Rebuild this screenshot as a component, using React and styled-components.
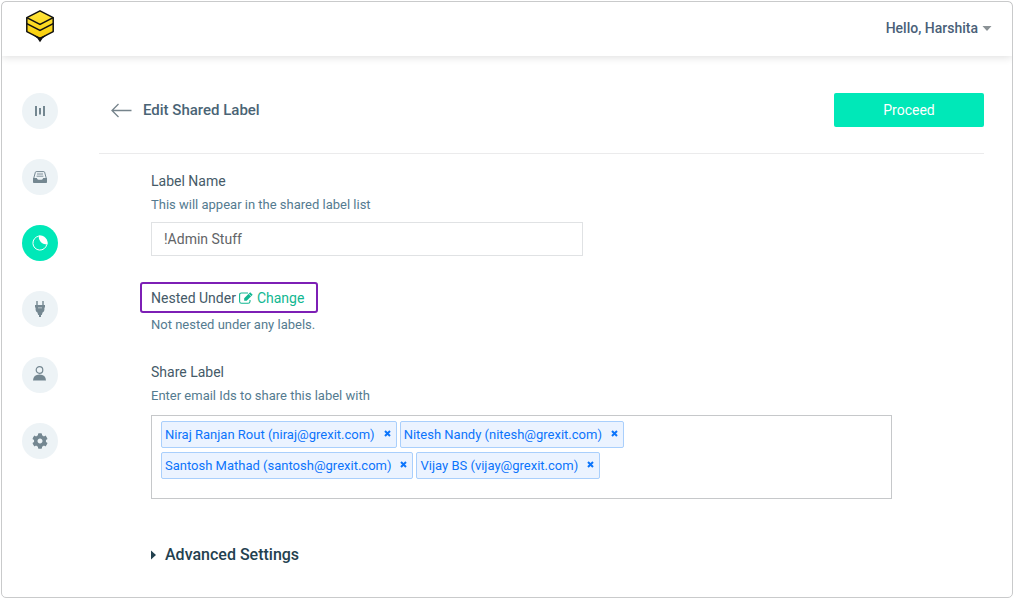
import React, { useState } from 'react'
import styled, { createGlobalStyle } from 'styled-components'
import { FaCog } from 'react-icons/fa'

const GlobalStyle = createGlobalStyle`
  *, *::before, *::after {
    box-sizing: border-box;
  }
  body {
    margin: 0;
    background: #ffffff;
    color: #455a68;
    font-family: Roboto, 'Liberation Sans', sans-serif;
    font-size: 14px;
    line-height: 20px;
  }
  button, input {
    font: inherit;
    color: inherit;
  }
  button {
    border: 0;
    padding: 0;
    background: none;
    cursor: pointer;
  }
`

const Frame = styled.div`
  display: flex;
  flex-direction: column;
  min-height: calc(100vh - 3px);
  margin: 1px 1px 2px;
  border: 1px solid #c9cacb;
  border-radius: 5px;
`

const Header = styled.header`
  display: flex;
  align-items: center;
  justify-content: space-between;
  height: 54px;
  padding: 0 20px 2px 23px;
  border-radius: 5px 5px 0 0;
  box-shadow: 0 1px 8px rgba(0, 0, 0, 0.14);
  clip-path: inset(0 0 -12px 0);
`

const LogoLink = styled.a`
  display: flex;
  padding-bottom: 4px;
`

const UserMenu = styled.button`
  display: flex;
  align-items: center;
  gap: 4px;
  color: #4a5f78;
  font-weight: 500;
`

const Body = styled.div`
  display: flex;
  flex: 1;
`

const Sidebar = styled.nav`
  display: flex;
  flex-direction: column;
  gap: 30px;
  padding: 37px 20px;
`

const NavItem = styled.a`
  display: flex;
  align-items: center;
  justify-content: center;
  width: 36px;
  height: 36px;
  border-radius: 50%;
  background: ${props => (props.$active ? '#00e8b8' : '#edf3f6')};
  color: ${props => (props.$active ? '#ffffff' : '#748791')};
`

const Main = styled.main`
  flex: 1;
  padding: 37px 28px 28px 21px;
`

const TitleBar = styled.div`
  display: flex;
  align-items: center;
  justify-content: space-between;
  padding-bottom: 26px;
  border-bottom: 1px solid #ebebec;
`

const TitleGroup = styled.div`
  display: flex;
  align-items: center;
  gap: 11px;
  padding-left: 12px;
`

const BackLink = styled.a`
  display: flex;
  color: #76848c;
`

const Title = styled.h1`
  margin: 0;
  color: #4a6475;
  font-size: 15px;
  font-weight: 500;
`

const Proceed = styled.button`
  width: 150px;
  height: 34px;
  border-radius: 2px;
  background: #00e8b8;
  color: #ffffff;
`

const Form = styled.form`
  padding: 17px 92px 0 52px;
`

const Section = styled.section`
  margin-bottom: ${props => props.$space};
`

const Label = styled.label`
  display: block;
`

const Hint = styled.p`
  margin: ${props => (props.$tight ? '3px' : '5px')} 0 8px;
  color: #547b90;
  font-size: 13px;
  line-height: 18px;
`

const TextInput = styled.input`
  display: block;
  width: 432px;
  max-width: 100%;
  height: 34px;
  padding: 0 12px;
  border: 1px solid #e0e2e4;
  color: #626467;
`

const Highlight = styled.div`
  display: flex;
  align-items: center;
  gap: 3px;
  width: fit-content;
  height: 31px;
  margin-left: -11px;
  padding: 0 12px 0 9px;
  border: 2px solid #7d1fb5;
  border-radius: 3px;
`

const ChangeLink = styled.a`
  display: flex;
  align-items: center;
  gap: 4px;
  color: #11b791;
  text-decoration: none;
`

const TagBox = styled.div`
  display: flex;
  flex-wrap: wrap;
  gap: 4px 3px;
  margin-top: 10px;
  padding: 5px 20px 19px 9px;
  border: 1px solid #c6c8ca;
`

const Tag = styled.span`
  display: flex;
  align-items: center;
  gap: 9px;
  height: 27px;
  padding: 0 5px 0 3px;
  border: 1px solid #a9cffc;
  border-radius: 2px;
  background: #ebf3ff;
  color: #0b74fb;
  font-size: 13px;
`

const RemoveButton = styled.button`
  display: flex;
  padding-bottom: 3px;
`

const TagInput = styled.input`
  flex: 1;
  min-width: 20px;
  width: 20px;
  height: 27px;
  padding: 0 4px;
  border: 0;
  outline: 0;
  background: transparent;
`

const Disclosure = styled.button`
  display: flex;
  align-items: center;
  gap: 9px;
  color: #23414f;
  font-size: 16px;
  font-weight: 500;
`

const Logo = () => (
  <svg width="30" height="34" viewBox="0 0 30 34" aria-hidden="true">
    <defs>
      <linearGradient id="gold" x1="0" y1="0" x2="0" y2="1">
        <stop offset="0" stopColor="#ffe63c" />
        <stop offset="1" stopColor="#f9cd08" />
      </linearGradient>
    </defs>
    <path
      d="M15 1.8 28.2 8.6V22.6L15 29.4 1.8 22.6V8.6Z"
      fill="url(#gold)"
      stroke="#111"
      strokeWidth="1.5"
      strokeLinejoin="round"
    />
    <path
      d="M1.8 8.6 15 15.4 28.2 8.6M1.8 14.6 15 21.4 28.2 14.6"
      fill="none"
      stroke="#111"
      strokeWidth="1.5"
    />
    <path d="M7.5 25.5 15 28.6 22.5 25.5 17.5 29.5 15 33.2 12.5 29.5Z" fill="#111" />
  </svg>
)

const ChartIcon = () => (
  <svg width="10" height="10" viewBox="0 0 10 10" fill="currentColor" aria-hidden="true">
    <path d="M0 0h2v10H0zM4 2h2v6.5H4zM8 0h2v10H8z" />
  </svg>
)

const InboxIcon = () => (
  <svg width="14" height="12" viewBox="0 0 14 12" aria-hidden="true">
    <path
      d="M.8 7 2.4 1.2Q2.6.6 3.2.6h7.6q.6 0 .8.6L13.2 7"
      fill="none"
      stroke="currentColor"
      strokeWidth="1"
    />
    <path d="M4 3h6M3.6 5.2h6.8" stroke="currentColor" strokeWidth="0.9" />
    <path
      d="M0 7h3.8q.5 1.8 1.6 1.8h3.2Q9.7 8.8 10.2 7H14v4.2q0 .8-.8.8H.8Q0 12 0 11.2Z"
      fill="currentColor"
    />
  </svg>
)

const PieIcon = () => (
  <svg width="16" height="16" viewBox="0 0 16 16" aria-hidden="true">
    <path
      d="M6.6 1.2A7 7 0 1 0 14.8 9.4"
      fill="none"
      stroke="currentColor"
      strokeWidth="1"
    />
    <path
      d="M6.6.4A8 8 0 0 1 15.6 9.6Q10.6 9.4 8.2 6.2 6.4 3.6 6.6.4Z"
      fill="currentColor"
    />
  </svg>
)

const PlugIcon = () => (
  <svg width="10" height="16" viewBox="0 0 10 16" fill="currentColor" aria-hidden="true">
    <path d="M1 0h2v4H1zM7 0h2v4H7z" opacity="0.7" />
    <path d="M0 4h10v2.5H9.4v2.5Q9.2 10.5 7.6 11.5L6.8 14H6v2H4v-2h-.8L2.4 11.5Q.8 10.5.6 9V6.5H0z" />
    <path d="M3 6h4v1.5H3z" fill="#a3b0b7" />
  </svg>
)

const UserIcon = () => (
  <svg width="14" height="18" viewBox="0 0 14 18" aria-hidden="true">
    <circle cx="6.5" cy="4" r="3.3" fill="none" stroke="currentColor" strokeWidth="1.2" />
    <path d="M0 14.6Q.2 8.4 6.5 8.4T13 14.6Z" fill="currentColor" />
  </svg>
)

const BackIcon = () => (
  <svg width="21" height="15" viewBox="0 0 21 15" fill="none" stroke="currentColor" aria-hidden="true">
    <path d="M1.2 7.5H20.5M7.5 1 1 7.5 7.5 14" strokeWidth="1.3" />
  </svg>
)

const EditIcon = () => (
  <svg width="14" height="12" viewBox="0 0 14 12" aria-hidden="true">
    <path
      d="M9 1H2.5Q.6 1 .6 2.8v6.6Q.6 11.3 2.5 11.3h6.6q1.9 0 1.9-1.9V8"
      fill="none"
      stroke="currentColor"
      strokeWidth="1.1"
    />
    <path d="M11.2.3 13.7 2.8 7.7 8.8H5.2V6.3Z" fill="currentColor" />
    <path d="M9.7 1.8 12.2 4.3" stroke="#fff" strokeWidth="0.6" />
  </svg>
)

const CaretDown = () => (
  <svg width="10" height="5" viewBox="0 0 10 5" fill="#8b9296" aria-hidden="true">
    <path d="M.5 0h9L5 5z" />
  </svg>
)

const CaretRight = () => (
  <svg width="5" height="10" viewBox="0 0 5 10" fill="currentColor" aria-hidden="true">
    <path d="M0 .5v9L5 5z" />
  </svg>
)

const CrossIcon = () => (
  <svg width="7" height="7" viewBox="0 0 7 7" stroke="currentColor" aria-hidden="true">
    <path d="M1 1l5 5M6 1L1 6" strokeWidth="2" />
  </svg>
)

const navItems = [
  { name: 'Reports', icon: <ChartIcon /> },
  { name: 'Inboxes', icon: <InboxIcon /> },
  { name: 'Shared labels', icon: <PieIcon />, active: true },
  { name: 'Integrations', icon: <PlugIcon /> },
  { name: 'Users', icon: <UserIcon /> },
  { name: 'Settings', icon: <FaCog size={16} /> },
]

const people = [
  'Niraj Ranjan Rout (niraj@grexit.com)',
  'Nitesh Nandy (nitesh@grexit.com)',
  'Santosh Mathad (santosh@grexit.com)',
  'Vijay BS (vijay@grexit.com)',
]

const App = () => {
  const [tags, setTags] = useState(people)

  return (
    <>
      <GlobalStyle />
      <Frame>
        <Header>
          <LogoLink href="#home" aria-label="Home">
            <Logo />
          </LogoLink>
          <UserMenu type="button" aria-haspopup="menu">
            Hello, Harshita
            <CaretDown />
          </UserMenu>
        </Header>
        <Body>
          <Sidebar>
            {navItems.map(item => (
              <NavItem key={item.name} href="#nav" aria-label={item.name} $active={item.active}>
                {item.icon}
              </NavItem>
            ))}
          </Sidebar>
          <Main>
            <TitleBar>
              <TitleGroup>
                <BackLink href="#back" aria-label="Back">
                  <BackIcon />
                </BackLink>
                <Title>Edit Shared Label</Title>
              </TitleGroup>
              <Proceed type="submit" form="label-form">
                Proceed
              </Proceed>
            </TitleBar>
            <Form id="label-form" onSubmit={e => e.preventDefault()}>
              <Section $space="26px">
                <Label htmlFor="label-name">Label Name</Label>
                <Hint>This will appear in the shared label list</Hint>
                <TextInput id="label-name" type="text" defaultValue="!Admin Stuff" />
              </Section>
              <Section $space="28px">
                <Highlight>
                  Nested Under
                  <ChangeLink href="#change">
                    <EditIcon />
                    Change
                  </ChangeLink>
                </Highlight>
                <Hint $tight>Not nested under any labels.</Hint>
              </Section>
              <Section $space="46px">
                <Label htmlFor="share-with">Share Label</Label>
                <Hint>Enter email Ids to share this label with</Hint>
                <TagBox>
                  {tags.map(tag => (
                    <Tag key={tag}>
                      {tag}
                      <RemoveButton
                        type="button"
                        aria-label={`Remove ${tag}`}
                        onClick={() => setTags(tags.filter(t => t !== tag))}
                      >
                        <CrossIcon />
                      </RemoveButton>
                    </Tag>
                  ))}
                  <TagInput id="share-with" type="text" />
                </TagBox>
              </Section>
              <Disclosure type="button" aria-expanded="false">
                <CaretRight />
                Advanced Settings
              </Disclosure>
            </Form>
          </Main>
        </Body>
      </Frame>
    </>
  )
}

export default App
